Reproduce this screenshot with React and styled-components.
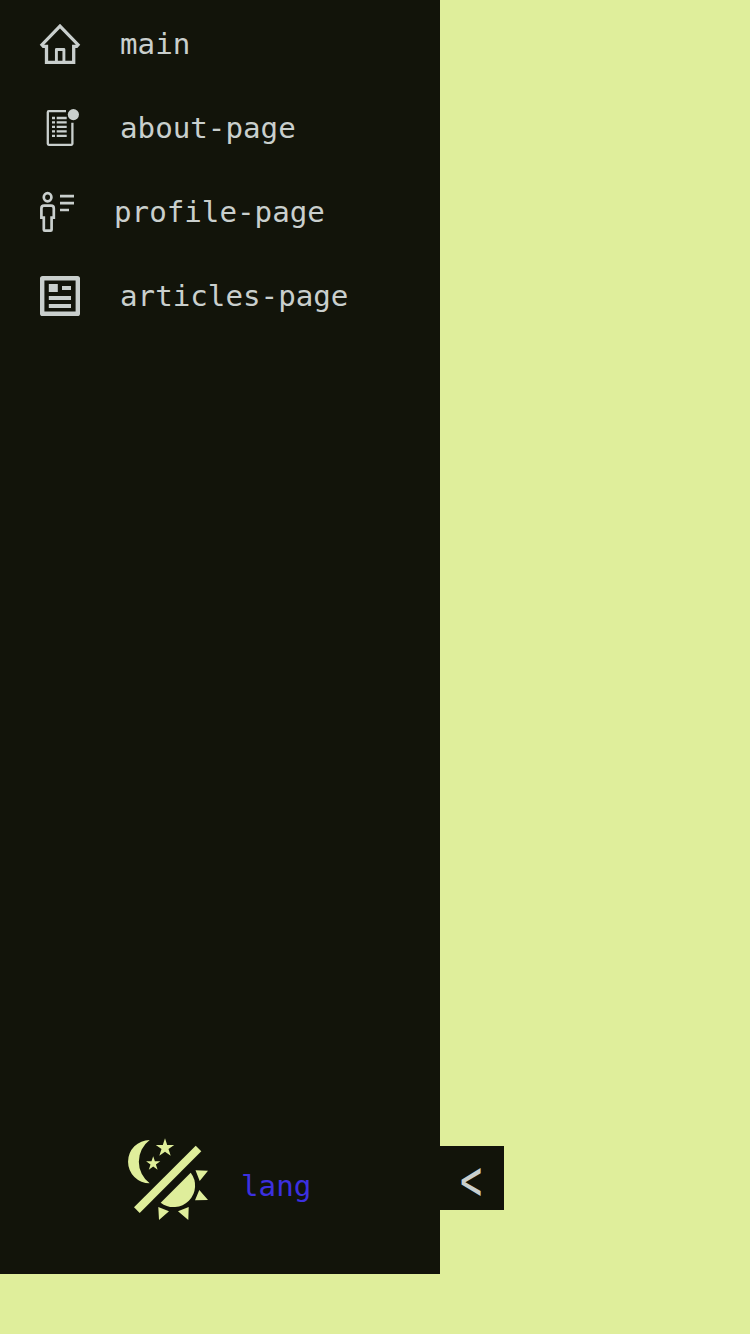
import React from 'react';
import styled, { createGlobalStyle } from 'styled-components';

const dark = '#12140a';
const lime = '#dfee9b';
const light = '#c9cfcd';

const GlobalStyle = createGlobalStyle`
  *, *::before, *::after { box-sizing: border-box; }
  body {
    margin: 0;
    background: ${lime};
    font-family: Consolas, "DejaVu Sans Mono", monospace;
    font-size: 29.2px;
    line-height: 40px;
  }
`;

const Page = styled.div`
  min-height: 1334px;
  background: ${lime};
`;

const Sidebar = styled.aside`
  position: relative;
  display: flex;
  flex-direction: column;
  justify-content: space-between;
  width: 440px;
  height: 1274px;
  padding: 24px 0 54px;
  background: ${dark};
  color: ${light};
`;

const Nav = styled.nav`
  display: flex;
  flex-direction: column;
  gap: 44px;
  padding-left: 40px;
`;

const NavLink = styled.a`
  display: flex;
  align-items: center;
  gap: 40px;
  height: 40px;
  color: inherit;
  white-space: nowrap;
`;

const Icon = styled.svg`
  display: block;
  flex: none;
  overflow: visible;
  fill: none;
  stroke: currentColor;
`;

const Footer = styled.footer`
  display: flex;
  align-items: center;
  gap: 33px;
  padding-left: 128px;
`;

const ThemeButton = styled.button`
  border: 0;
  padding: 0;
  background: none;
  color: ${lime};
`;

const LangButton = styled.button`
  border: 0;
  padding: 13px 0 0;
  background: none;
  color: #3c30e0;
  font: inherit;
`;

const CollapseButton = styled.button`
  position: absolute;
  right: -64px;
  bottom: 64px;
  display: flex;
  align-items: center;
  justify-content: center;
  width: 64px;
  height: 64px;
  border: 0;
  padding: 4px 2px 0 0;
  background: ${dark};
  color: ${light};
  font: inherit;
  font-size: 40px;
`;

const Chevron = styled.span`
  transform: scale(0.92, 1.42);
`;

const HomeIcon = () => (
  <Icon width="40" height="40" viewBox="0 0 40 40" strokeWidth="3.3">
    <path d="M20 2.2 38 20.7 36.6 22.3H33.7V38.3H6.5V22.3H3.4L2 20.7Z" />
    <path d="M16.4 38V25.5H23.9V38" strokeWidth="2.9" strokeLinejoin="round" />
  </Icon>
);

const AboutIcon = () => (
  <Icon width="40" height="40" viewBox="0 0 40 40" strokeWidth="2.3">
    <path d="M26 3.2H8.8Q7.8 3.2 7.8 4.2V35.8Q7.8 36.8 8.8 36.8H31.4Q32.4 36.8 32.4 35.8V14.7" />
    <path d="M12 10h3M16.7 10h10M12 14.4h3M16.7 14.4h10M12 18.8h3M16.7 18.8h10M12 23.3h3M16.7 23.3h10M12 27.8h3M16.7 27.8h10" />
    <circle cx="33.4" cy="6.6" r="5.6" fill="currentColor" stroke="none" />
  </Icon>
);

const ProfileIcon = () => (
  <Icon width="34" height="40" viewBox="0 0 34 40" strokeWidth="2.7">
    <ellipse cx="7.6" cy="5.3" rx="3.8" ry="4.1" />
    <path d="M4.2 13.7H11Q13.8 13.7 13.8 16.5V25.6H11.6V37.7Q11.6 38.7 10.6 38.7H4.8Q3.8 38.7 3.8 37.7V25.6H1.4V16.5Q1.4 13.7 4.2 13.7Z" />
    <path d="M20 4.1H34M20 11.1H34M20 18H29" />
  </Icon>
);

const ArticlesIcon = () => (
  <Icon width="40" height="40" viewBox="0 0 40 40" strokeWidth="4">
    <rect x="2.2" y="2.2" width="35.6" height="35.6" rx="0.4" strokeWidth="4.4" />
    <path d="M8.8 8H17.8V16H8.8Z" fill="currentColor" stroke="none" />
    <path d="M22 12H31M8.8 22H31M8.8 30H31" />
  </Icon>
);

const ThemeIcon = () => (
  <Icon width="80" height="82" viewBox="0 0 80 82">
    <g fill="currentColor" stroke="none">
      <path d="M21.7 2A21.65 21.65 0 0 0 21.7 45.3A27 27 0 0 1 21.7 2Z" />
      <path d="M37 .3 39.2 7H46.2L40.5 11.1 42.7 17.8 37 13.7 31.3 17.8 33.5 11.1 27.8 7H34.8Z" />
      <path d="M25.2 18.2 26.9 23.3H32.3L27.9 26.5 29.6 31.7 25.2 28.5 20.8 31.7 22.5 26.5 18.1 23.3H23.5Z" />
      <path d="M67.7 7.7 73.3 13.3 11.7 75 6 69.3Z" />
      <path d="M62.7 34.7A21.4 21.4 0 0 1 32.7 64.7Z" />
      <path d="M67.5 32.3 80 32.8 71.7 43ZM71.3 52 80 62 67 62.3ZM30.3 69 41 73.3 31 82ZM50 73.3 60.7 69 60.3 82Z" />
    </g>
  </Icon>
);

const links = [
  { label: 'main', Glyph: HomeIcon },
  { label: 'about-page', Glyph: AboutIcon },
  { label: 'profile-page', Glyph: ProfileIcon },
  { label: 'articles-page', Glyph: ArticlesIcon },
];

export default function App() {
  return (
    <Page>
      <GlobalStyle />
      <Sidebar>
        <Nav>
          {links.map(({ label, Glyph }) => (
            <NavLink key={label}>
              <Glyph />
              <span>{label}</span>
            </NavLink>
          ))}
        </Nav>
        <Footer>
          <ThemeButton><ThemeIcon /></ThemeButton>
          <LangButton>lang</LangButton>
        </Footer>
        <CollapseButton><Chevron>&lt;</Chevron></CollapseButton>
      </Sidebar>
    </Page>
  );
}
